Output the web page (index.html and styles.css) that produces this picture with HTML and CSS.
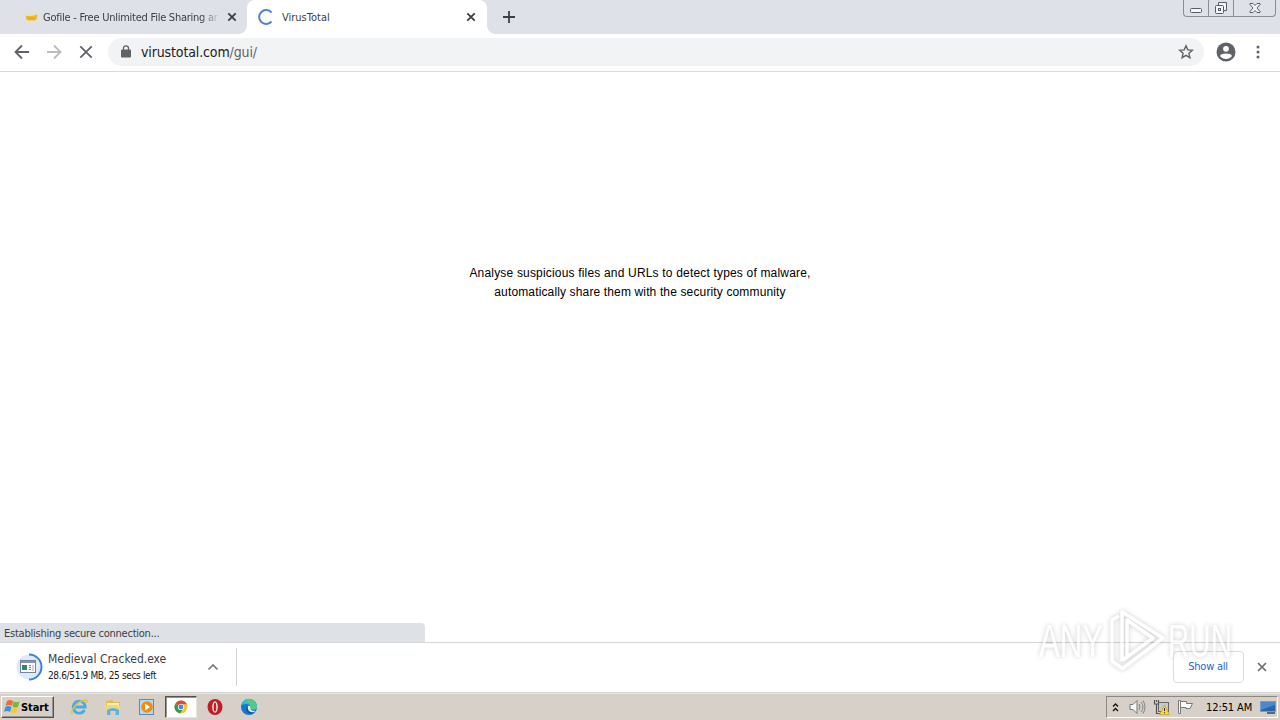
FILE: index.html
```
<!DOCTYPE html>
<html lang="en">
<head>
    <meta charset="UTF-8">
    <meta name="viewport" content="width=device-width, initial-scale=1.0">
    <title>VirusTotal</title>
    <link rel="stylesheet" href="styles.css">
</head>
<body>
    <div class="desktop">
        <div class="tab-strip">
            <div class="tab">
                <svg class="favicon" width="16" height="16" viewBox="0 0 16 16">
                    <path d="M4 6.500l5 .5 6-1.500v4l-2 2H6L4 10z" fill="#f2b91d"/>
                    <path d="M2 5.500l4 1 7-.8" fill="none" stroke="#eee2b7"/>
                    <path d="M6 9.500h7" stroke="#e5a51a"/>
                </svg>
                <span class="tab-title faded">Gofile - Free Unlimited File Sharing an</span>
                <svg class="tab-close" width="10" height="10" viewBox="0 0 10 10"><path d="M1.300 1.300l7.400 7.400M8.700 1.300L1.300 8.700"/></svg>
            </div>
            <div class="tab active">
                <svg class="favicon" width="16" height="16" viewBox="0 0 16 16"><path d="M13.500 3.500A7 7 0 1 0 13.500 12.500" fill="none" stroke="#5581ca" stroke-width="2"/></svg>
                <span class="tab-title">VirusTotal</span>
                <svg class="tab-close" width="10" height="10" viewBox="0 0 10 10"><path d="M1.300 1.300l7.400 7.400M8.700 1.300L1.300 8.700"/></svg>
            </div>
            <svg class="new-tab" width="14" height="14" viewBox="0 0 14 14"><path d="M7 1v12M1 7h12"/></svg>
            <div class="window-buttons">
                <div class="win-btn"><svg width="14" height="14" viewBox="0 0 14 14"><rect x="1.500" y="7.500" width="11" height="4" rx="1"/></svg></div>
                <div class="win-btn"><svg width="14" height="14" viewBox="0 0 14 14"><path d="M4.500 4V1.500h8v8H10"/><rect x="1.500" y="4.500" width="8" height="8" rx="1"/><rect x="4.500" y="7.500" width="2" height="2"/></svg></div>
                <div class="win-btn wide"><svg width="14" height="14" viewBox="0 0 14 14"><path d="M2 2.500h3l2 2 2-2h3v1L9 7l3 3.500v1H9l-2-2-2 2H2v-1L5 7 2 3.500z"/></svg></div>
            </div>
        </div>

        <div class="toolbar">
            <svg class="nav-icon" width="16" height="16" viewBox="0 0 16 16"><path d="M15 8H2M8 1.500L1.500 8 8 14.500"/></svg>
            <svg class="nav-icon disabled" width="16" height="16" viewBox="0 0 16 16"><path d="M1 8h13M8 1.500L14.500 8 8 14.500"/></svg>
            <svg class="nav-icon" width="16" height="16" viewBox="0 0 16 16"><path d="M2.300 2.300l11.400 11.400M13.700 2.300L2.300 13.700"/></svg>
            <div class="address-bar">
                <svg class="lock" width="10" height="13" viewBox="0 0 10 13"><rect y="4.500" width="10" height="8" rx="1" fill="#5f6368"/><path d="M2.500 5V3.300a2.500 2.500 0 0 1 5 0V5" fill="none" stroke="#5f6368" stroke-width="1.300"/></svg>
                <span class="url">virustotal.com<span class="path">/gui/</span></span>
                <svg class="star" width="16" height="16" viewBox="0 0 16 16"><path d="M8 1.800l1.800 4.100 4.500.4-3.400 3 1 4.400L8 11.400l-3.900 2.300 1-4.400-3.400-3 4.500-.4z"/></svg>
            </div>
            <svg class="avatar" width="20" height="20" viewBox="0 0 20 20"><circle cx="10" cy="10" r="9.500" fill="#5f6368"/><circle cx="10" cy="6.800" r="2.900" fill="#fff"/><path d="M4 14c1.200-3.200 10.800-3.200 12 0-2.700 4-9.300 4-12 0z" fill="#fff"/></svg>
            <svg class="menu" width="4" height="16" viewBox="0 0 4 16" fill="#5f6368"><circle cx="2" cy="3" r="1.500"/><circle cx="2" cy="8" r="1.500"/><circle cx="2" cy="13" r="1.500"/></svg>
        </div>

        <div class="page">
            <p class="message"><span class="line-one">Analyse suspicious files and URLs to detect types of malware,</span><br><span class="line-two">automatically share them with the security community</span></p>
            <div class="status">Establishing secure connection...</div>
        </div>

        <div class="downloads">
            <div class="download">
                <svg class="file-icon" width="28" height="28" viewBox="0 0 28 28">
                    <circle cx="14" cy="14" r="12.500" fill="#e0e9f8"/>
                    <path d="M14 1.500a12.500 12.500 0 0 1 0 25" fill="none" stroke="#417fda" stroke-width="2"/>
                    <rect x="5.500" y="7.500" width="15" height="12" fill="#fbfbf8" stroke="#76869a"/>
                    <path d="M6 9h14" stroke="#7998bc" stroke-width="2"/>
                    <rect x="7" y="12" width="5" height="5" fill="#37836e"/>
                    <path d="M14 12.500h2M14 14.500h2M14 16.500h2" stroke="#70896f"/>
                    <path d="M18 12v6" stroke="#a5adb5"/>
                </svg>
                <div class="file-text">
                    <div class="file-name">Medieval Cracked.exe</div>
                    <div class="file-info">28.6/51.9 MB, 25 secs left</div>
                </div>
                <svg class="chevron" width="12" height="8" viewBox="0 0 12 8"><path d="M1.500 6.500L6 2l4.500 4.500"/></svg>
            </div>
            <button class="show-all">Show all</button>
            <svg class="shelf-close" width="10" height="10" viewBox="0 0 10 10"><path d="M1 1l8 8M9 1L1 9"/></svg>
        </div>

        <div class="taskbar">
            <div class="start">
                <svg width="17" height="16" viewBox="0 0 17 16">
                    <path d="M3 2q3-2 6 0L8 7Q5 5 1.500 7z" fill="#ed6b37"/>
                    <path d="M9.500 2.500q3 1.500 6 0L14 8q-3 1-5.500-.5z" fill="#74b83e"/>
                    <path d="M1.300 8q3-2 6.200 0L6 13q-3-2-6 0z" fill="#3995da"/>
                    <path d="M8.200 8.500q3 1.500 5.800 0l-1.500 5q-3 1.500-5.800 0z" fill="#f6c93b"/>
                </svg>
                <span>Start</span>
            </div>
            <div class="quick-launch">
                <div class="task"><svg width="18" height="18" viewBox="0 0 18 18"><path d="M14.500 12a6 6 0 1 1 .7-3H5" fill="none" stroke="#4aabe2" stroke-width="2.800"/><path d="M2.500 16c-4-2 6-14 13.500-14 1.500.2 1 2 .5 3" fill="none" stroke="#e9bd47" stroke-width="1.500"/></svg></div>
                <div class="task"><svg width="18" height="18" viewBox="0 0 18 18"><path d="M2 3l6-1 2 2h6v10H2z" fill="#dfbd55"/><path d="M3 5h12v8H3z" fill="#fbefaa"/><path d="M2 7h14v7H2z" fill="#f0d77d"/><path d="M3 17v-5q6-4 12 0v5h-3.500v-4h-5v4z" fill="#62b1da"/></svg></div>
                <div class="task"><svg width="18" height="18" viewBox="0 0 18 18"><rect x="1.500" y="1.500" width="14" height="15" fill="#b9d8ed" stroke="#4d91c4"/><circle cx="9" cy="9" r="5.800" fill="#ef8b16"/><path d="M7 5.500l5 3.500-5 3.500z" fill="#fff"/></svg></div>
                <div class="task pressed"><svg width="14" height="14" viewBox="0 0 14 14"><circle cx="7" cy="7" r="6.500" fill="#efc933"/><path d="M7 7L1.200 4A6.500 6.500 0 0 1 12.900 4.200H7z" fill="#dc4b3d"/><path d="M1.200 4A6.500 6.500 0 0 0 6 13.400L9.200 8.500 7 7z" fill="#319b58"/><circle cx="7" cy="7" r="3.100" fill="#fff"/><circle cx="7" cy="7" r="2.400" fill="#4784db"/></svg></div>
                <div class="task"><svg width="18" height="18" viewBox="0 0 18 18"><ellipse cx="9" cy="9" rx="7.500" ry="8" fill="#bd2027"/><ellipse cx="9" cy="9" rx="2.800" ry="5.800" fill="#f5e9e6"/><ellipse cx="9" cy="9" rx="1.300" ry="4.500" fill="#b5252b"/></svg></div>
                <div class="task"><svg width="18" height="18" viewBox="0 0 18 18"><circle cx="9" cy="9" r="8" fill="#1679cd"/><path d="M1.200 7A8 8 0 0 1 17 8c.2 4-4 4.500-6.500 3 1-4-2-6.500-9.300-4z" fill="#37bdc0"/><path d="M9 1a8 8 0 0 1 8 8c-.5 3-4 3-6.500 2 1-3 0-6-5-8z" fill="#55c986"/><path d="M8 8c-1 4 3 6 7.500 4.500l-2.500 3C7 17 4 11 8 8z" fill="#1553a0"/><path d="M8 8c2-1 3 1 2.500 3 1 2 3 2 5 1.500L14 14c-4 1-7-2-6-6z" fill="#e2eff1"/></svg></div>
            </div>
            <div class="tray">
                <svg class="tray-more" width="7" height="11" viewBox="0 0 7 11"><path d="M1 4.500l2.500-2.500L6 4.500M1 9L3.500 6.500 6 9"/></svg>
                <svg class="speaker" width="17" height="16" viewBox="0 0 17 16"><path d="M1 5.500h3l4-4v13l-4-4H1z" fill="#f7f7f5" stroke="#777"/><path d="M10 5q2 3 0 6M12 3q4 5 0 10M14 1.500q4 6.500 0 13" fill="none" stroke="#828282"/></svg>
                <svg class="network" width="17" height="16" viewBox="0 0 17 16"><rect x="5.500" y="3.500" width="10" height="9" fill="#c8c9c9" stroke="#666"/><path d="M1.500 1v4h4V1M3.500 5v9.500H9M3.500 1v2" fill="none" stroke="#555" stroke-width="1.200"/><path d="M11.500 6l5 9.500h-10z" fill="#fadb2b" stroke="#bf9d22" stroke-width=".7"/><path d="M11.500 9v3M11.500 13.200v1" stroke="#333"/></svg>
                <svg class="flag" width="17" height="16" viewBox="0 0 17 16"><path d="M1.500 1.500h2v13h-2z" fill="#fafaf8" stroke="#777"/><path d="M3.500 2.500h6v2h6L13 9.500H9v-1H3.500z" fill="#fafaf8" stroke="#777"/></svg>
                <span class="clock">12:51 AM</span>
                <svg class="show-desktop" width="16" height="14" viewBox="0 0 16 14"><rect x=".5" y="1.500" width="15" height="10" fill="#2864a8" stroke="#729dca"/><path d="M1 2h14v3L1 10z" fill="#4d88c8"/><path d="M7 13h8" stroke="#24486b" stroke-width="1.500"/></svg>
            </div>
        </div>

        <!-- Watermark -->
        <svg class="watermark" width="220" height="76" viewBox="0 0 220 76">
            <g class="mark">
                <text x="9" y="55" textLength="64" lengthAdjust="spacingAndGlyphs">ANY</text>
                <path d="M89 14l-7 4v41l11 8M92 59V10l41 26-41 31M97 54V18l26 18-30 22"/>
                <text x="138" y="55" textLength="64" lengthAdjust="spacingAndGlyphs">RUN</text>
            </g>
        </svg>
    </div>
</body>
</html>
```

FILE: styles.css
```
* {
    box-sizing: border-box;
}

body {
    margin: 0;
    font-family: "DejaVu Sans Condensed", "DejaVu Sans", sans-serif;
    font-size: 11px;
    color: #3c4043;
    background-color: #fff;
}

svg {
    display: block;
    flex-shrink: 0;
}

.desktop {
    display: flex;
    flex-direction: column;
    width: 1280px;
    height: 720px;
    position: relative;
    overflow: hidden;
}

.tab-strip {
    display: flex;
    height: 34px;
    background-color: #dee1e8;
}

.tab {
    display: flex;
    align-items: center;
    width: 247px;
    padding: 0 10px 0 22px;
}

.tab.active {
    position: relative;
    width: 240px;
    padding: 0 11px;
    background-color: #fff;
    border-radius: 8px 8px 0 0;
}

.tab.active::before,
.tab.active::after {
    content: "";
    position: absolute;
    bottom: 0;
    width: 8px;
    height: 8px;
}

.tab.active::before {
    left: -8px;
    background: radial-gradient(circle at 0 0, transparent 7.5px, #fff 8px);
}

.tab.active::after {
    right: -8px;
    background: radial-gradient(circle at 100% 0, transparent 7.5px, #fff 8px);
}

.tab-title {
    flex: 1;
    margin-left: 5px;
    margin-right: 9px;
    overflow: hidden;
    white-space: nowrap;
    letter-spacing: -0.25px;
}

.tab.active .tab-title {
    margin-left: 8px;
    letter-spacing: 0;
}

.faded {
    -webkit-mask-image: linear-gradient(to right, #000 158px, transparent 177px);
    mask-image: linear-gradient(to right, #000 158px, transparent 177px);
}

.tab-close,
.new-tab {
    fill: none;
    stroke: #3c4043;
    stroke-width: 1.8;
}

.new-tab {
    margin: 10px 0 0 15px;
}

.window-buttons {
    display: flex;
    width: 93px;
    height: 17px;
    margin: 0 4px 0 auto;
    border: 1px solid #8a8d98;
    border-top: 0;
    border-radius: 0 0 4px 4px;
}

.win-btn {
    display: flex;
    justify-content: center;
    align-items: center;
    width: 25px;
    border-right: 1px solid #8a8d98;
}

.win-btn.wide {
    width: 41px;
    border-right: 0;
}

.win-btn svg {
    fill: #f4f5f7;
    stroke: #575b65;
}

.toolbar {
    display: flex;
    align-items: center;
    height: 38px;
    padding: 0 20px 2px 14px;
    border-bottom: 1px solid #d9dadc;
}

.nav-icon {
    margin-right: 16px;
    fill: none;
    stroke: #5f6368;
    stroke-width: 1.8;
}

.nav-icon.disabled {
    stroke: #babcbe;
}

.address-bar {
    display: flex;
    align-items: center;
    width: 1096px;
    height: 28px;
    margin-left: -2px;
    padding: 0 10px 0 13px;
    border-radius: 14px;
    background-color: #f1f3f4;
}

.url {
    margin-left: 10px;
    font-size: 14px;
    letter-spacing: -0.13px;
    color: #202124;
}

.path {
    color: #5f6368;
}

.star {
    margin-left: auto;
    fill: none;
    stroke: #5f6368;
    stroke-width: 1.4;
}

.avatar {
    margin-left: 12px;
}

.menu {
    margin-left: auto;
}

.page {
    flex: 1;
    display: flex;
    flex-direction: column;
    justify-content: space-between;
}

.message {
    margin: 192px 0 0;
    font-family: "Liberation Sans", Arial, sans-serif;
    font-size: 12px;
    line-height: 19px;
    text-align: center;
    color: #000;
}

.line-one {
    letter-spacing: 0.18px;
}

.line-two {
    letter-spacing: 0.14px;
}

.status {
    width: 425px;
    height: 19px;
    padding-left: 4px;
    line-height: 21px;
    letter-spacing: -0.23px;
    background-color: #dee1e6;
    border-top-right-radius: 4px;
}

.downloads {
    display: flex;
    align-items: center;
    height: 51px;
    padding: 0 13px 2px 0;
    border-top: 1px solid #d4d5d7;
    border-bottom: 1px solid #d4d5d7;
}

.download {
    display: flex;
    align-items: center;
    width: 237px;
    height: 38px;
    padding: 0 17px 0 15px;
    border-right: 1px solid #d4d5d7;
}

.file-text {
    margin-left: 5px;
    padding-top: 1px;
    white-space: nowrap;
}

.file-name {
    font-size: 12px;
    line-height: 17px;
}

.file-info {
    font-size: 10px;
    line-height: 16px;
    letter-spacing: -0.35px;
    color: #202124;
}

.chevron {
    margin-left: auto;
    fill: none;
    stroke: #777a7e;
    stroke-width: 1.7;
}

.show-all {
    width: 71px;
    height: 32px;
    margin-left: auto;
    padding: 0 1px 0 0;
    border: 1px solid #dadce0;
    border-radius: 4px;
    background-color: #fff;
    font-family: inherit;
    font-size: 11px;
    letter-spacing: -0.25px;
    color: #1a67c9;
}

.shelf-close {
    margin-left: 13px;
    fill: none;
    stroke: #6a6d71;
    stroke-width: 1.7;
}

.taskbar {
    display: flex;
    align-items: center;
    height: 27px;
    padding: 0 2px 0 1px;
    background-color: #d6d0c8;
    border-top: 1px solid #e9e6e1;
    color: #000;
}

.start {
    display: flex;
    align-items: center;
    width: 53px;
    height: 22px;
    padding-left: 2px;
    border: 1px solid;
    border-color: #fff #55524e #55524e #fff;
    box-shadow: inset -1px -1px #99958e;
    font-weight: bold;
    letter-spacing: -0.1px;
}

.quick-launch {
    display: flex;
    gap: 2px;
    margin-left: 9px;
}

.task {
    display: flex;
    justify-content: center;
    align-items: center;
    width: 32px;
    height: 22px;
}

.task.pressed {
    background-color: #fff;
    border: 1px solid;
    border-color: #55524e #e8e5df #e8e5df #55524e;
    box-shadow: inset 1px 1px #99958e;
}

.tray {
    display: flex;
    align-items: center;
    width: 172px;
    height: 22px;
    margin-left: auto;
    padding: 0 1px 0 5px;
    border: 1px solid;
    border-color: #8c8881 #fff #fff #8c8881;
}

.tray-more {
    fill: none;
    stroke: #111;
    stroke-width: 1.4;
}

.speaker {
    margin-left: 10px;
}

.network {
    margin-left: 7px;
}

.flag {
    margin-left: 7px;
}

.clock {
    margin-left: 12px;
    letter-spacing: -0.1px;
    white-space: nowrap;
}

.show-desktop {
    margin-left: auto;
}

.watermark {
    position: absolute;
    top: 602px;
    left: 1030px;
    pointer-events: none;
}

.mark {
    fill: #fff;
    filter: drop-shadow(0 0 2.5px rgba(0, 0, 0, 0.32));
    opacity: 0.65;
}

.mark text {
    font-family: "Liberation Sans", Arial, sans-serif;
    font-size: 46px;
}

.mark path {
    fill: none;
    stroke: #fff;
    stroke-width: 3.5;
    stroke-linejoin: round;
}
```
